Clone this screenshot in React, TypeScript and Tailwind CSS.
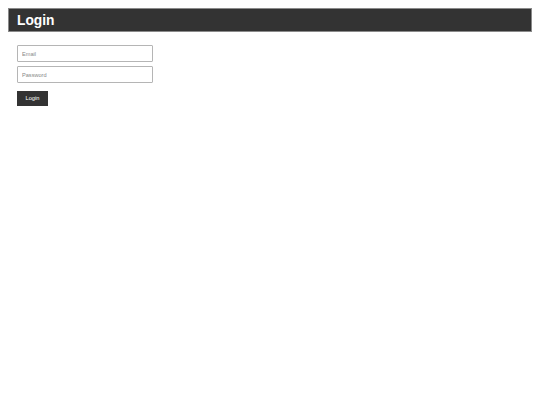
export default function App() {
  return (
    <div className="min-h-[405px] bg-white p-2 font-['Liberation_Sans',Arial,sans-serif]">
      <div className="flex h-6 items-center border border-[#8a8a8a] bg-[#333333] px-2 pt-[2px]">
        <h1 className="text-[13.8px] font-bold leading-none text-white">Login</h1>
      </div>
      <form className="flex flex-col px-[9px] pt-[13px]">
        <input
          placeholder="Email"
          className="h-[17px] w-[136px] rounded-[1px] border border-[#b5b5b5] px-[4px] text-[5.6px] placeholder:text-[#888]"
        />
        <input
          type="password"
          placeholder="Password"
          className="mt-[4px] h-[17px] w-[136px] rounded-[1px] border border-[#b5b5b5] px-[4px] text-[5.6px] placeholder:text-[#888]"
        />
        <button
          type="button"
          className="mt-[8px] h-[15px] w-[31px] bg-[#333333] text-[5.7px] text-white"
        >
          Login
        </button>
      </form>
    </div>
  );
}
